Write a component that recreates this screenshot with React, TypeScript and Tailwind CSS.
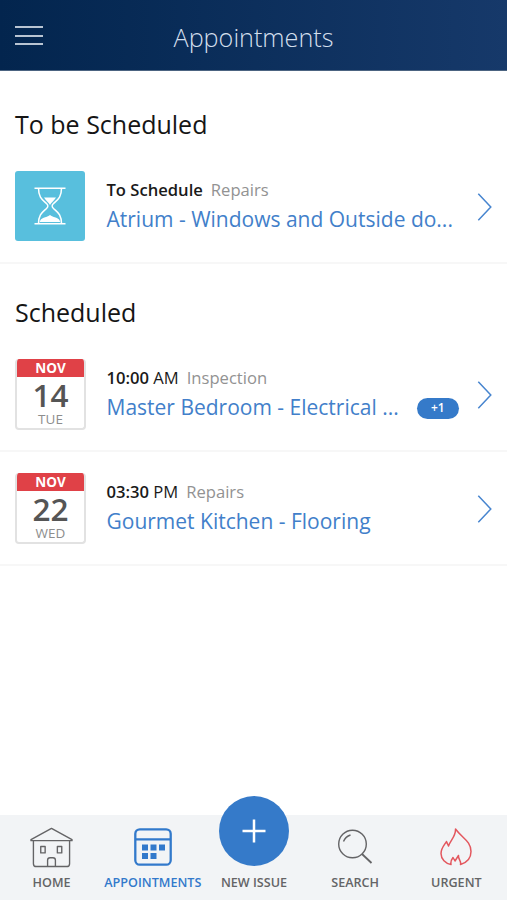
import type { ReactNode } from "react";

const SANS = "font-['Open_Sans','Noto_Sans',sans-serif]";

function Chevron() {
  return (
    <svg className="mt-[22px] ml-auto h-[28px] w-[16px] shrink-0" viewBox="0 0 16 28" fill="none" stroke="#4785cf" strokeWidth="1.5">
      <path d="M1.3 0.8 L13.8 14 L1.3 27.2" />
    </svg>
  );
}

function HourglassTile() {
  return (
    <div className="flex h-[70px] w-[70px] shrink-0 items-center justify-center rounded-[3px] bg-[#58bfdd]">
      <svg className="h-[38px] w-[32px]" viewBox="0 0 32 38" fill="none" stroke="#fff" strokeWidth="1.5">
        <path d="M0.5 1.2H31.5M0.5 36.8H31.5" />
        <path d="M4.5 1.2C4.5 11 9 13 12.5 16.5C14.3 18.2 14.3 19.8 12.5 21.5C9 25 4.5 27 4.5 36.8M27.5 1.2C27.5 11 23 13 19.5 16.5C17.7 18.2 17.7 19.8 19.5 21.5C23 25 27.5 27 27.5 36.8" />
        <path d="M10 10.5H22C20.500 13.500 17 15.500 16 18C15 15.500 11.500 13.500 10 10.500Z" fill="#fff" stroke="none" />
        <path d="M5.800 35C6.500 30 12 31 16 28C20 31 25.500 30 26.200 35Z" fill="#fff" stroke="none" />
      </svg>
    </div>
  );
}

function DateTile({ month, day, weekday }: { month: string; day: string; weekday: string }) {
  return (
    <div className="h-[71px] w-[71px] shrink-0 overflow-hidden rounded-[4px] border-2 border-t-0 border-[#e2e2e2] bg-white text-center">
      <div className="-mx-[2px] h-[18px] bg-[#e04147] text-[13.5px] leading-[18px] font-bold text-white">{month}</div>
      <div className="h-[36px] text-[31.5px] leading-[36px] font-semibold text-[#555]">{day}</div>
      <div className="text-[13.5px] leading-[12px] text-[#8d8d8d]">{weekday}</div>
    </div>
  );
}

interface RowProps {
  tile: ReactNode;
  strong: string;
  suffix?: string;
  kind: string;
  title: string;
  badge?: string;
}

function Row({ tile, strong, suffix, kind, title, badge }: RowProps) {
  return (
    <div className="flex h-[114px] items-start border-b-2 border-[#f7f7f7] pt-[21px] pr-[14px] pl-[15px]">
      <div className="w-[91.5px] shrink-0">{tile}</div>
      <div>
        <div className="mt-[7px] h-[24px] text-[16.6px] leading-[24px] whitespace-pre text-[#1a1a1a]">
          <span className="font-semibold">{strong}</span>
          {suffix && <span> {suffix}</span>}
          <span className="ml-[8px] text-[#929292]">{kind}</span>
        </div>
        <div className="flex h-[34px] items-center text-[21px] leading-[34px] whitespace-nowrap text-[#427fca]">
          <span>{title}</span>
          {badge && (
            <span className="mt-[2px] ml-[18px] flex h-[21px] w-[42px] items-center justify-center rounded-full bg-[#357ac9] text-[12px] font-semibold text-white">
              {badge}
            </span>
          )}
        </div>
      </div>
      <Chevron />
    </div>
  );
}

function NavItem({ label, color, children }: { label: string; color: string; children: ReactNode }) {
  return (
    <div className={`flex w-1/5 flex-col items-center ${color}`}>
      <div className="flex h-[59px] items-end justify-center">{children}</div>
      <div className="text-[12.6px] leading-[18px] font-semibold whitespace-nowrap">{label}</div>
    </div>
  );
}

export default function App() {
  return (
    <div className={`flex h-[900px] w-[507px] flex-col overflow-hidden bg-white ${SANS}`}>
      <header className="relative flex h-[71px] shrink-0 items-center justify-center border-b border-[#4c6481] bg-linear-to-r from-[#03254e] to-[#16396a] pt-[3px]">
        <div className="absolute top-[26px] left-[15px] flex h-[19px] w-[28px] flex-col justify-between">
          <span className="h-[2px] bg-[#b9c4d2]" />
          <span className="h-[2px] bg-[#b9c4d2]" />
          <span className="h-[2px] bg-[#b9c4d2]" />
        </div>
        <h1 className="text-[25.2px] leading-[36px] font-light text-[#d3dfec]">Appointments</h1>
      </header>

      <main className="flex-1">
        <h2 className="h-[79px] pt-[36px] pl-[15px] text-[25px] leading-[34px] text-[#151515]">To be Scheduled</h2>
        <Row tile={<HourglassTile />} strong="To Schedule" kind="Repairs" title="Atrium - Windows and Outside do..." />
        <h2 className="h-[74px] pt-[31px] pl-[15px] text-[25px] leading-[34px] text-[#151515]">Scheduled</h2>
        <Row
          tile={<DateTile month="NOV" day="14" weekday="TUE" />}
          strong="10:00"
          suffix="AM"
          kind="Inspection"
          title="Master Bedroom - Electrical ..."
          badge="+1"
        />
        <Row
          tile={<DateTile month="NOV" day="22" weekday="WED" />}
          strong="03:30"
          suffix="PM"
          kind="Repairs"
          title="Gourmet Kitchen - Flooring"
        />
      </main>

      <nav className="flex h-[85px] shrink-0 bg-[#f2f4f6] pl-px">
        <NavItem label="HOME" color="text-[#646466]">
          <svg className="mb-[6px] h-[41px] w-[43px]" viewBox="0 0 44 41" fill="none" stroke="currentColor" strokeWidth="1.4" strokeLinejoin="round">
            <path d="M1 13.5V12.5L22 1L43 12.5V13.5Z" />
            <path d="M3.5 13.5V37Q3.5 40 6.5 40H37.5Q40.5 40 40.5 37V13.5" />
            <path d="M11 19.5H15.5V26H11ZM28 19.5H32.5V26H28Z" />
            <path d="M18 40V33.5Q18 31 20.5 31H23.5Q26 31 26 33.5V40" />
          </svg>
        </NavItem>
        <NavItem label="APPOINTMENTS" color="text-[#3279cb]">
          <svg className="mb-[8px] h-[38px] w-[38px]" viewBox="0 0 38 38" fill="none" stroke="currentColor" strokeWidth="2.3">
            <rect x="1.3" y="1.3" width="35.4" height="35.4" rx="4.5" />
            <path d="M1.3 11.3H36.7" />
            <path d="M8 16.5h6v6h-6zM16.5 16.5h6v6h-6zM25 16.5h6v6h-6zM8 25h6v6h-6zM16.5 25h6v6h-6z" fill="currentColor" stroke="none" />
          </svg>
        </NavItem>
        <NavItem label="NEW ISSUE" color="text-[#646466]">
          <div className="mb-[8px] flex h-[70px] w-[70px] shrink-0 items-center justify-center rounded-full bg-[#357ac9]">
            <svg className="h-[24px] w-[24px]" viewBox="0 0 24 24" stroke="#fff" strokeWidth="2.5">
              <path d="M12 0.5V23.5M0.5 12H23.5" />
            </svg>
          </div>
        </NavItem>
        <NavItem label="SEARCH" color="text-[#646466]">
          <svg className="mb-[10px] h-[35px] w-[35px]" viewBox="0 0 35 35" fill="none" stroke="currentColor" strokeWidth="1.4">
            <circle cx="14.5" cy="15" r="13.8" />
            <path d="M24 25L33.500 34" strokeWidth="1.8" />
            <path d="M5.500 12.5Q7.500 7.5 12.500 6" />
          </svg>
        </NavItem>
        <NavItem label="URGENT" color="text-[#646466]">
          <svg className="mb-[8px] h-[38px] w-[32px]" viewBox="0 0 32 38" fill="none" stroke="#e3575e" strokeWidth="1.5" strokeLinejoin="round">
            <path d="M15.5 1C16 8 10.5 12 8.5 18L6.5 13.5C4.5 17 1 20 1 25.5C1 31 5.5 35.5 11 36.5C10.5 34 11.5 31.5 13 29.5L15 33L18.5 27.5C18 31 21.5 33 20.5 36.5C27 34.5 31 30 31 23.5C31 13 22 10 15.5 1Z" />
          </svg>
        </NavItem>
      </nav>
    </div>
  );
}
